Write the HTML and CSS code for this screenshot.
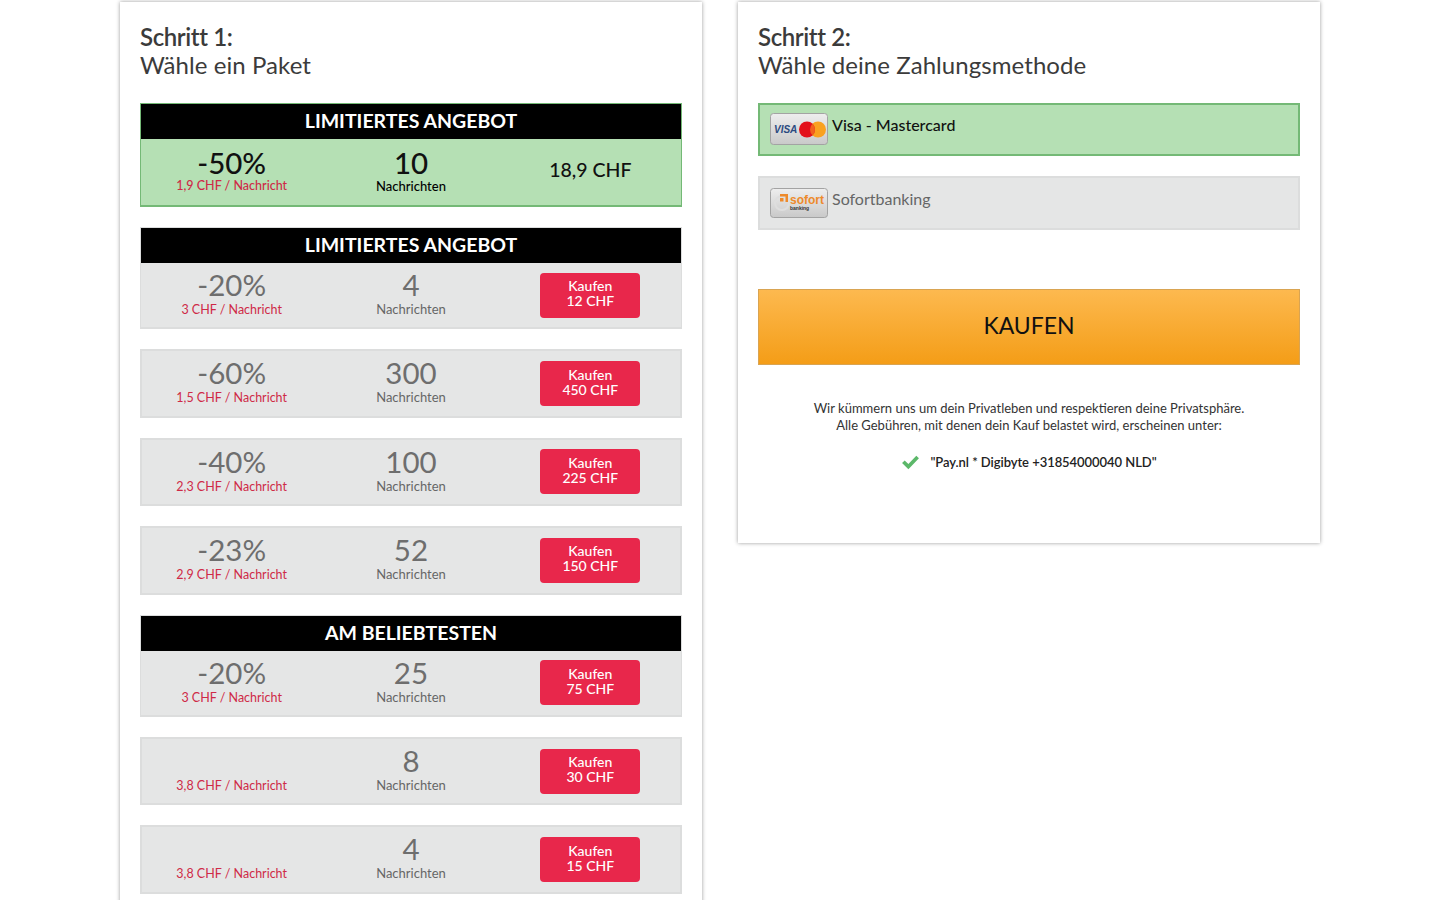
FILE: index.html
```html
<!DOCTYPE html>
<html lang="de">
<head>
  <meta charset="UTF-8">
  <meta name="viewport" content="width=device-width, initial-scale=1">
  <title>Kaufen</title>
  <link rel="stylesheet" href="styles.css">
</head>
<body>

  <div class="steps">

    <div class="card">
      <h2><strong>Schritt 1:</strong><br>Wähle ein Paket</h2>

      <div class="offer offer-head selected">
        <div class="offer-title">LIMITIERTES ANGEBOT</div>
        <div class="offer-body">
          <div class="cell"><div class="big">-50%</div><div class="sub price">1,9 CHF / Nachricht</div></div>
          <div class="cell"><div class="big">10</div><div class="sub">Nachrichten</div></div>
          <div class="total">18,9 CHF</div>
        </div>
      </div>

      <div class="offer offer-head">
        <div class="offer-title">LIMITIERTES ANGEBOT</div>
        <div class="offer-body">
          <div class="cell"><div class="big">-20%</div><div class="sub price">3 CHF / Nachricht</div></div>
          <div class="cell"><div class="big">4</div><div class="sub">Nachrichten</div></div>
          <a class="buy">Kaufen<br>12 CHF</a>
        </div>
      </div>

      <div class="offer">
        <div class="offer-body">
          <div class="cell"><div class="big">-60%</div><div class="sub price">1,5 CHF / Nachricht</div></div>
          <div class="cell"><div class="big">300</div><div class="sub">Nachrichten</div></div>
          <a class="buy">Kaufen<br>450 CHF</a>
        </div>
      </div>

      <div class="offer">
        <div class="offer-body">
          <div class="cell"><div class="big">-40%</div><div class="sub price">2,3 CHF / Nachricht</div></div>
          <div class="cell"><div class="big">100</div><div class="sub">Nachrichten</div></div>
          <a class="buy">Kaufen<br>225 CHF</a>
        </div>
      </div>

      <div class="offer">
        <div class="offer-body">
          <div class="cell"><div class="big">-23%</div><div class="sub price">2,9 CHF / Nachricht</div></div>
          <div class="cell"><div class="big">52</div><div class="sub">Nachrichten</div></div>
          <a class="buy">Kaufen<br>150 CHF</a>
        </div>
      </div>

      <div class="offer offer-head">
        <div class="offer-title">AM BELIEBTESTEN</div>
        <div class="offer-body">
          <div class="cell"><div class="big">-20%</div><div class="sub price">3 CHF / Nachricht</div></div>
          <div class="cell"><div class="big">25</div><div class="sub">Nachrichten</div></div>
          <a class="buy">Kaufen<br>75 CHF</a>
        </div>
      </div>

      <div class="offer">
        <div class="offer-body">
          <div class="cell"><div class="big">&nbsp;</div><div class="sub price">3,8 CHF / Nachricht</div></div>
          <div class="cell"><div class="big">8</div><div class="sub">Nachrichten</div></div>
          <a class="buy">Kaufen<br>30 CHF</a>
        </div>
      </div>

      <div class="offer">
        <div class="offer-body">
          <div class="cell"><div class="big">&nbsp;</div><div class="sub price">3,8 CHF / Nachricht</div></div>
          <div class="cell"><div class="big">4</div><div class="sub">Nachrichten</div></div>
          <a class="buy">Kaufen<br>15 CHF</a>
        </div>
      </div>
    </div>

    <div class="card card-pay">
      <h2><strong>Schritt 2:</strong><br>Wähle deine Zahlungsmethode</h2>

      <div class="method selected">
        <svg class="method-logo" viewBox="0 0 58 32">
          <defs>
            <linearGradient id="logoBg" x1="0" y1="0" x2="0" y2="1">
              <stop offset="0" stop-color="#eeeeee"/>
              <stop offset="1" stop-color="#c9c9c9"/>
            </linearGradient>
          </defs>
          <rect x="0.5" y="0.5" width="57" height="31" rx="3" fill="url(#logoBg)" stroke="#a3a3a3"/>
          <text x="4" y="20" class="visa">VISA</text>
          <circle cx="48" cy="16.500" r="8" fill="#f9a11f"/>
          <circle cx="37" cy="16.500" r="8" fill="#e3101a"/>
          <path d="M42.500 10.700a8 8 0 0 1 0 11.600a8 8 0 0 1 0-11.600z" fill="#f2601c"/>
        </svg>
        <span>Visa - Mastercard</span>
      </div>

      <div class="method">
        <svg class="method-logo logo-small" viewBox="0 0 58 30">
          <rect x="0.5" y="0.5" width="57" height="29" rx="3" fill="url(#logoBg)" stroke="#a3a3a3"/>
          <circle cx="12" cy="15" r="7" fill="none" stroke="#dedede" stroke-width="2"/>
          <path d="M10 6h8v8h-2.500v-5.500h-5.500zM10 10h3.500v3.500h-3.500z" fill="#ee8a2b"/>
          <text x="20" y="16" class="sofort">sofort</text>
          <text x="20" y="22" class="sofort-sub">banking</text>
        </svg>
        <span>Sofortbanking</span>
      </div>

      <a class="checkout">KAUFEN</a>

      <p class="note">Wir kümmern uns um dein Privatleben und respektieren deine Privatsphäre.<br>Alle Gebühren, mit denen dein Kauf belastet wird, erscheinen unter:</p>

      <div class="statement">
        <svg class="check" viewBox="0 0 18 14">
          <path d="M1 7.500l2.500-2.500 3.500 3.500 7.500-8 2.500 2.500-10 10.500z" fill="#5cb86a"/>
        </svg>
        <span>"Pay.nl * Digibyte +31854000040 NLD"</span>
      </div>
    </div>

  </div>

</body>
</html>
```

FILE: styles.css
```css
html, body {
  margin: 0;
  height: 900px;
  overflow: hidden;
}
body {
  font-family: "Lato", "Open Sans", sans-serif;
  background-color: #fff;
  color: #333;
}
.steps {
  display: flex;
  align-items: flex-start;
  gap: 36px;
  width: 1200px;
  margin: 2px auto 0;
}
.card {
  box-sizing: border-box;
  width: 582px;
  padding: 20px 20px 40px;
  background: #fff;
  box-shadow: 0 0 4px rgba(0, 0, 0, 0.4);
}
.card-pay {
  height: 541px;
}
h2 {
  box-sizing: border-box;
  margin: 0 0 21px;
  padding-top: 1px;
  font-size: 24px;
  font-weight: 400;
  line-height: 28px;
  height: 60px;
  letter-spacing: 0.07px;
  color: #3b3b3b;
}
h2 strong {
  font-weight: 600;
  letter-spacing: -0.4px;
}

/* packages */
.offer {
  box-sizing: border-box;
  margin-bottom: 20px;
  border: 2px solid #dcdddd;
  background: #e5e6e6;
  color: #666;
}
.offer-head {
  border-width: 1px 1px 2px;
}
.offer-title {
  height: 35px;
  line-height: 33px;
  background: #000;
  color: #fff;
  text-align: center;
  font-size: 19.5px;
  font-weight: 700;
}
.offer-body {
  display: grid;
  grid-template-columns: repeat(3, 1fr);
  align-items: center;
  justify-items: center;
  height: 64.4px;
  text-align: center;
}
.offer-head .offer-body {
  padding: 0 1px;
}
.cell {
  align-self: start;
  padding-top: 7px;
}
.big {
  font-size: 29.5px;
  line-height: 30px;
  color: #6e6e6e;
}
.sub {
  margin-top: 1px;
  font-size: 13px;
  line-height: 16px;
}
.price {
  margin-top: 2px;
  font-size: 12.5px;
  color: #cf2a47;
}
.buy {
  box-sizing: border-box;
  width: 100px;
  height: 45px;
  padding-top: 5.5px;
  border-radius: 4px;
  background: #e8274b;
  color: #fff;
  font-size: 14px;
  line-height: 15px;
  font-weight: 500;
  text-align: center;
}
.total {
  padding-bottom: 5px;
  font-size: 19.5px;
  font-weight: 500;
  color: #111;
}
.offer.selected {
  border-color: #74b976;
  background: #b5e0b4;
  color: #000;
}
.offer.selected .offer-body {
  height: 66px;
}
.offer.selected .cell {
  padding-top: 9px;
}
.offer.selected .big {
  color: #111;
  font-weight: 500;
}
.offer.selected .sub {
  margin-top: 0;
  font-weight: 500;
}
.offer.selected .price {
  color: #cf2a47;
}

/* payment */
.method {
  box-sizing: border-box;
  display: flex;
  gap: 4px;
  height: 54px;
  margin-bottom: 20px;
  padding: 8px 10px;
  border: 2px solid #dcdddd;
  background: #e5e6e6;
  color: #666;
  font-size: 16px;
  line-height: 26px;
}
.method.selected {
  height: 53px;
  border-color: #74b976;
  background: #b5e0b4;
  color: #111;
  font-weight: 500;
  line-height: 24px;
}
.method-logo {
  width: 58px;
  height: 32px;
}
.logo-small {
  height: 30px;
  margin-top: 2px;
}
.visa {
  font: italic 700 10px "Liberation Sans", sans-serif;
  fill: #2b4a80;
}
.sofort {
  font: 700 12px "Liberation Sans", sans-serif;
  fill: #ee8a2b;
}
.sofort-sub {
  font: 700 5px "Liberation Sans", sans-serif;
  fill: #333;
}
.checkout {
  display: block;
  box-sizing: border-box;
  height: 76px;
  margin-top: 59px;
  border: 1px solid #d9a452;
  background: linear-gradient(#fdb94f, #f49d17);
  color: #111;
  font-size: 23px;
  line-height: 70px;
  text-align: center;
}
.note {
  margin: 35px 0 0;
  font-size: 13px;
  line-height: 17px;
  text-align: center;
}
.statement {
  display: flex;
  justify-content: center;
  align-items: center;
  gap: 10px;
  margin-top: 20px;
  font-size: 13px;
  font-weight: 600;
  letter-spacing: -0.05px;
  color: #222;
}
.check {
  width: 19px;
  height: 15px;
}
```
